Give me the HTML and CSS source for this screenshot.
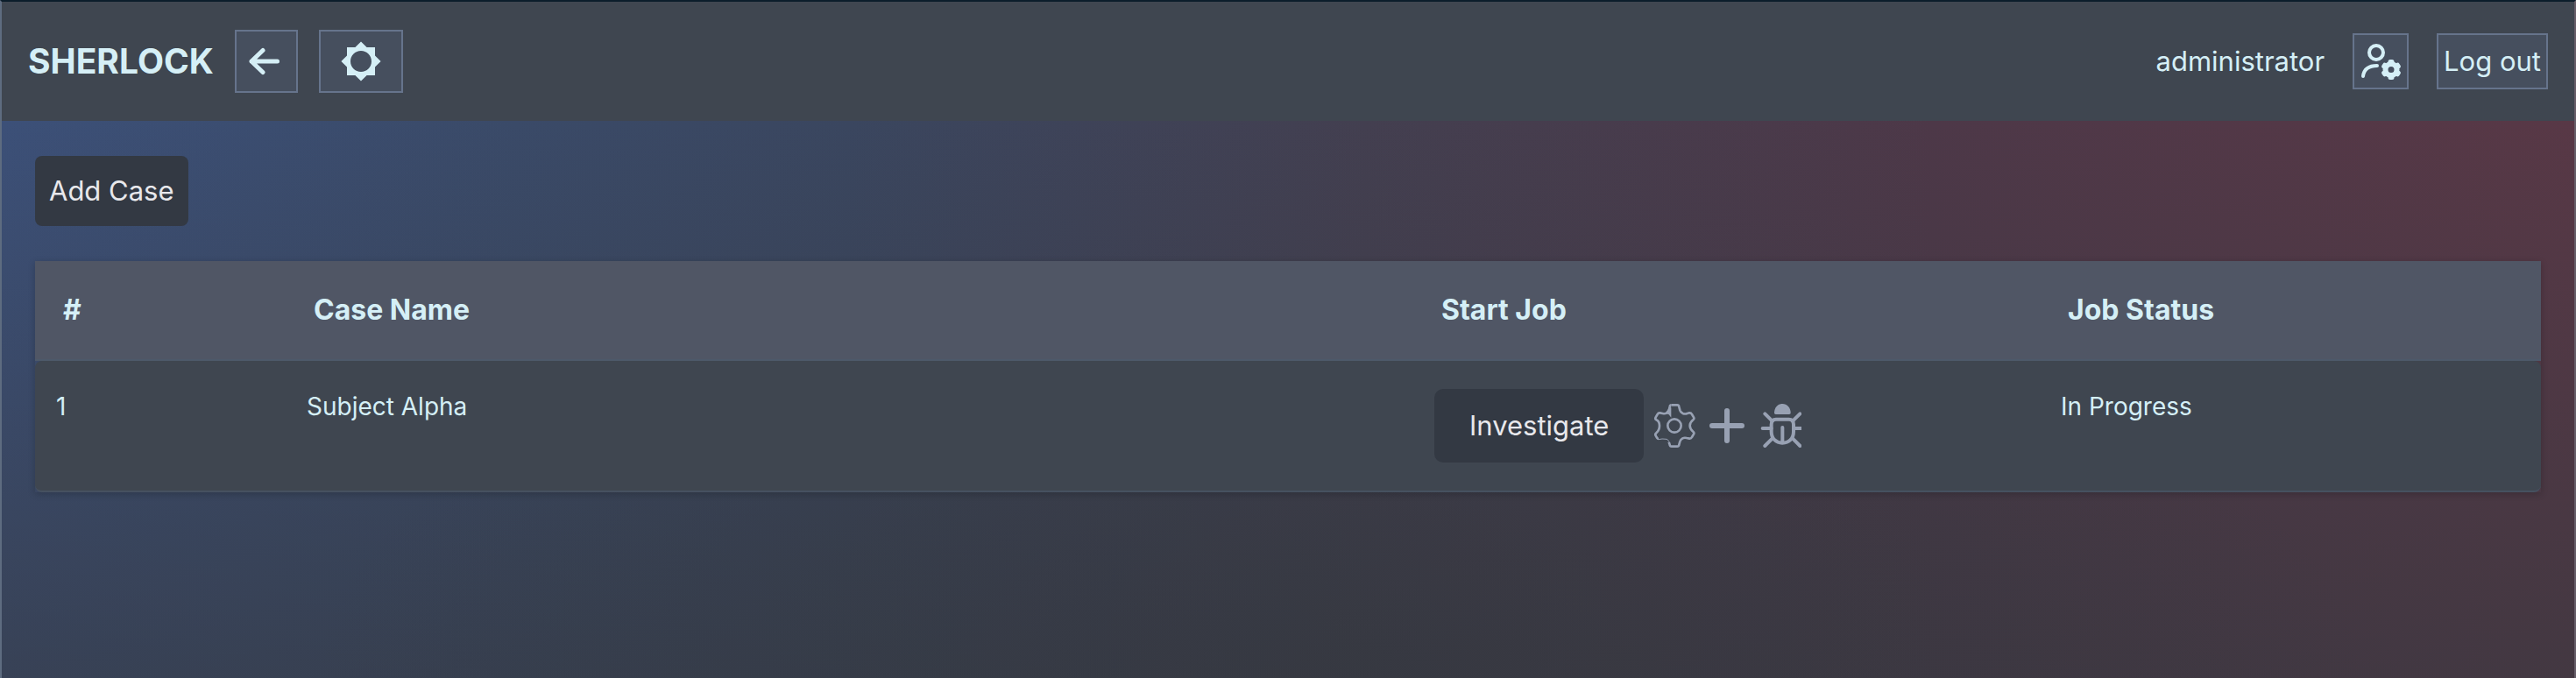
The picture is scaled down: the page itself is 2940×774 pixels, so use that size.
FILE: index.html
```html
<!DOCTYPE html>
<html lang="en">
<head>
    <meta charset="UTF-8">
    <meta name="viewport" content="width=device-width, initial-scale=1.0">
    <title>Sherlock</title>
    <link rel="stylesheet" href="styles.css">
</head>
<body>

    <header class="navbar">
        <h1 class="brand">SHERLOCK</h1>
        <button type="button" class="nav-btn back-btn" aria-label="Back">
            <svg width="40" height="40" viewBox="0 0 40 40" fill="none" stroke="currentColor" stroke-width="5" stroke-linecap="round" stroke-linejoin="round">
                <path d="M32.5 20H3M16 7.5L3 20l13 12.5"/>
            </svg>
        </button>
        <button type="button" class="nav-btn theme-btn" aria-label="Toggle theme">
            <svg width="48" height="48" viewBox="0 0 24 24" fill="currentColor">
                <path d="M20 15.31L23.31 12 20 8.69V4h-4.69L12 .69 8.69 4H4v4.69L.69 12 4 15.31V20h4.69L12 23.31 15.31 20H20v-4.69zM12 18c-3.31 0-6-2.69-6-6s2.69-6 6-6 6 2.69 6 6-2.69 6-6 6z"/>
            </svg>
        </button>

        <div class="user-area">
            <span class="username">administrator</span>
            <button type="button" class="nav-btn user-btn" aria-label="User settings">
                <svg width="60" height="60" viewBox="2 2 60 60" fill="none" stroke="currentColor" stroke-width="4" stroke-linecap="round">
                    <circle cx="27" cy="22" r="8"/>
                    <path d="M12 49c1-8 6-12 16-12"/>
                    <circle cx="44" cy="41.5" r="6.5" stroke-width="6"/>
                    <g stroke-width="5">
                        <path d="M43 32.5h2M43 50.5h2"/>
                        <path d="M43 32.5h2M43 50.5h2" transform="rotate(60 44 41.5)"/>
                        <path d="M43 32.5h2M43 50.5h2" transform="rotate(120 44 41.5)"/>
                    </g>
                </svg>
            </button>
            <button type="button" class="nav-btn logout-btn">Log out</button>
        </div>
    </header>

    <main class="container">
        <button type="button" class="btn add-btn">Add Case</button>

        <table class="case-table">
            <thead>
                <tr>
                    <th class="col-id">#</th>
                    <th class="col-name">Case Name</th>
                    <th class="col-job">Start Job</th>
                    <th class="col-status">Job Status</th>
                </tr>
            </thead>
            <tbody>
                <tr>
                    <td>1</td>
                    <td>Subject Alpha</td>
                    <td>
                        <div class="actions">
                            <button type="button" class="btn investigate-btn">Investigate</button>
                            <button type="button" class="icon-btn" aria-label="Settings">
                                <svg width="50" height="52" viewBox="45 30 150 156" fill="none" stroke="currentColor" stroke-width="8" stroke-linejoin="round">
                                    <path d="M110 37h20q5 0 6 6l3 12q2 7 10 11 7 3 15 0l7-2q6-1 9 5l6 10q3 5-2 9-11 9-11 20t11 20q5 4 2 9l-6 10q-3 6-9 5l-9-2q-8-2-14 1-7 4-9 11l-3 11q-1 6-6 6h-20q-5 0-6-6l-3-9"/>
                                    <path d="M101 162q-2-6-8-8l-15-1-12 2" stroke-width="3"/>
                                    <path d="M66 153q-4 0-6-4l-4-7q-3-5 2-9 11-10 11-25T58 88q-5-4-2-9l6-10q3-6 9-5l9 2q7 2 13-1l8-8 3-14q1-6 6-6"/>
                                    <path d="M102 46l7 0v34l-8-10-12-5z" fill="currentColor" stroke="none"/>
                                    <circle cx="120" cy="108" r="23"/>
                                </svg>
                            </button>
                            <button type="button" class="icon-btn" aria-label="Add job">
                                <svg width="50" height="52" viewBox="225 30 150 156" fill="none" stroke="currentColor" stroke-width="18" stroke-linecap="round">
                                    <path d="M249 108h102M300 57v102"/>
                                </svg>
                            </button>
                            <button type="button" class="icon-btn" aria-label="Debug">
                                <svg width="50" height="52" viewBox="405 30 150 156" fill="none" stroke="currentColor" stroke-width="12" stroke-linecap="round">
                                    <path d="M462 64c0-18 12-31 28-31s28 13 28 31q0 5-5 5h-46q-5 0-5-5z" fill="currentColor" stroke="none"/>
                                    <path d="M468 86h44q16 0 16 18v24c0 24-16 39-38 39s-38-15-38-39v-24q0-18 16-18z"/>
                                    <path d="M490 114v48M430 67l25 25M550 67l-25 25M422 117h30M528 117h30M455 152l-25 25M525 152l25 25"/>
                                </svg>
                            </button>
                        </div>
                    </td>
                    <td>In Progress</td>
                </tr>
            </tbody>
        </table>
    </main>

</body>
</html>
```

FILE: styles.css
```css
/* General Styling */
* {
    box-sizing: border-box;
}

body {
    margin: 0;
    min-height: 100vh;
    border-top: 2px solid #0b1d2b;
    border-left: 2px solid #5e6c80;
    border-right: 2px solid #675e69;
    font-family: Inter, "Liberation Sans", sans-serif;
    font-size: 31px;
    line-height: 40px;
    color: #d5eff6;
    background-color: #35383f;
    background-image:
        radial-gradient(ellipse 40% 60% at 52% 100%, rgba(51, 55, 62, 0.6), rgba(51, 55, 62, 0)),
        linear-gradient(to bottom, rgba(53, 56, 63, 0) 18%, rgba(53, 56, 63, 0.6)),
        linear-gradient(to right, #3c5078, #3a4a68 20%, #3a465f 33%, #433f50 53%, #4d3848 75%, #583846);
}

button {
    font-family: inherit;
    font-size: 31px;
    line-height: 40px;
    padding: 0;
    cursor: pointer;
}

svg {
    display: block;
}

/* Top bar */
.navbar {
    display: flex;
    align-items: center;
    gap: 24px;
    height: 136px;
    padding: 0 30px;
    background-color: #3f4650;
}

.brand {
    margin: 0;
    font-size: 39px;
    font-weight: 700;
}

.nav-btn {
    display: flex;
    align-items: center;
    justify-content: center;
    height: 72px;
    border: 2px solid #66748c;
    background-color: #464f5e;
    color: #d5eff6;
}

.back-btn {
    width: 72px;
}

.theme-btn {
    width: 96px;
}

.user-area {
    display: flex;
    align-items: center;
    gap: 32px;
    margin-left: auto;
}

.user-btn {
    width: 64px;
    height: 64px;
}

.logout-btn {
    height: 64px;
    padding: 0 6px;
}

/* Page content */
.container {
    padding: 40px 38px;
}

.btn {
    border: none;
    border-radius: 8px;
    background-color: #333943;
    color: #e8e8ec;
}

.add-btn {
    height: 80px;
    padding: 0 16px;
}

.case-table {
    width: 100%;
    margin-top: 40px;
    table-layout: fixed;
    border-collapse: separate;
    border-spacing: 0;
    box-shadow: 0 2px 8px rgba(0, 0, 0, 0.2);
}

.col-id {
    width: 10%;
}

.col-name {
    width: 45%;
}

.col-job {
    width: 25%;
}

.col-status {
    width: 20%;
}

th {
    padding: 36px 32px;
    text-align: left;
    font-size: 32px;
    font-weight: 700;
    background-color: #505665;
    border-bottom: 2px solid #4d596a;
}

td {
    padding: 32px 24px;
    vertical-align: top;
    font-size: 28px;
    background-color: #3f4650;
    border-bottom: 2px solid #465160;
}

td:first-child {
    border-radius: 8px 0 0 8px;
}

td:last-child {
    border-radius: 0 8px 8px 0;
}

.actions {
    display: flex;
    align-items: center;
    gap: 10px;
}

.investigate-btn {
    height: 84px;
    padding: 0 40px;
    border-radius: 10px;
}

.icon-btn {
    border: none;
    background: none;
    color: #98a1b3;
}
```
